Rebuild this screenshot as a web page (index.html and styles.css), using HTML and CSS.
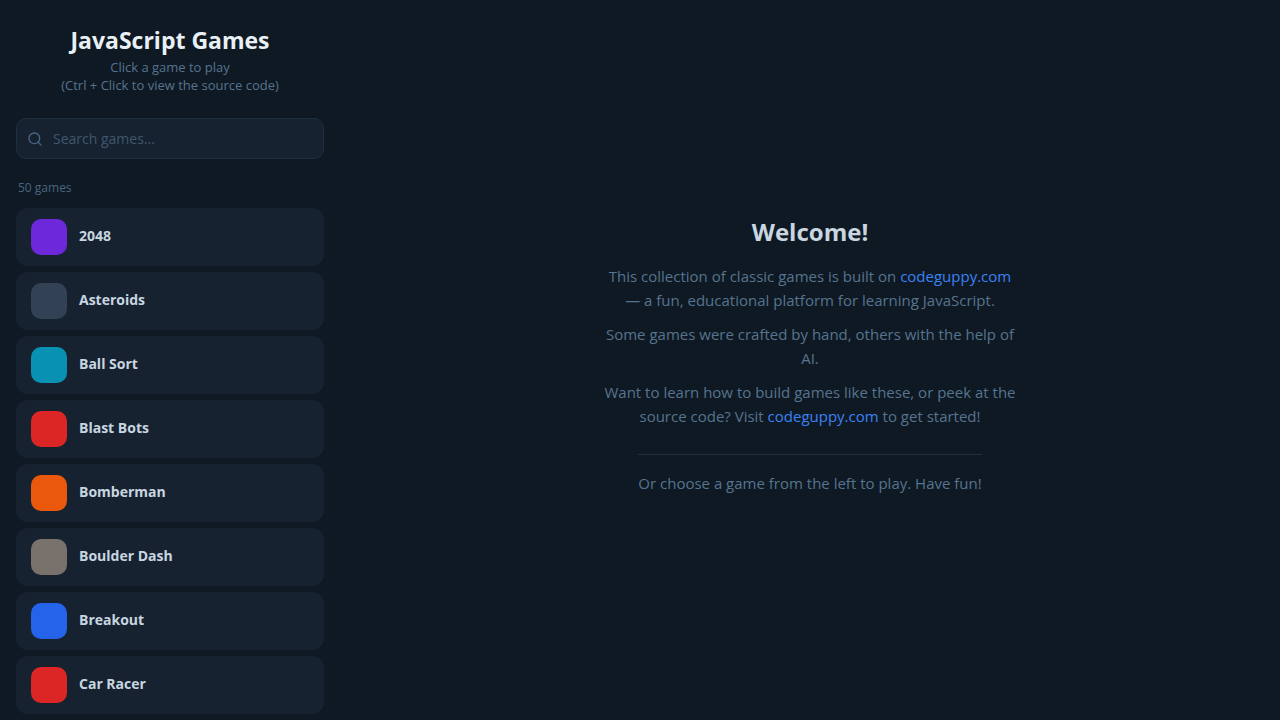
FILE: index.html
```html
<!DOCTYPE html>
<html lang="en">
<head>
    <meta charset="UTF-8">
    <meta name="viewport" content="width=device-width, initial-scale=1.0">
    <title>JavaScript Games</title>
    <link rel="stylesheet" href="styles.css">
</head>
<body>
    <aside class="sidebar">
        <header class="header">
            <h1>JavaScript Games</h1>
            <p>Click a game to play<br>(Ctrl + Click to view the source code)</p>
        </header>
        <label class="search">
            <svg class="search-icon" viewBox="0 0 24 24" aria-hidden="true">
                <circle cx="11" cy="11" r="8"/>
                <path d="M21 21l-4.35-4.35"/>
            </svg>
            <input type="search" placeholder="Search games..." aria-label="Search games">
        </label>
        <div class="count">50 games</div>
        <nav class="games">
            <a class="game" href="#2048"><span class="icon purple"></span><span class="name">2048</span></a>
            <a class="game" href="#asteroids"><span class="icon slate"></span><span class="name">Asteroids</span></a>
            <a class="game" href="#ball-sort"><span class="icon cyan"></span><span class="name">Ball Sort</span></a>
            <a class="game" href="#blast-bots"><span class="icon red"></span><span class="name">Blast Bots</span></a>
            <a class="game" href="#bomberman"><span class="icon orange"></span><span class="name">Bomberman</span></a>
            <a class="game" href="#boulder-dash"><span class="icon stone"></span><span class="name">Boulder Dash</span></a>
            <a class="game" href="#breakout"><span class="icon blue"></span><span class="name">Breakout</span></a>
            <a class="game" href="#car-racer"><span class="icon red"></span><span class="name">Car Racer</span></a>
        </nav>
    </aside>
    <main class="main">
        <div class="welcome">
            <h2>Welcome!</h2>
            <p>This collection of classic games is built on <a href="https://codeguppy.com">codeguppy.com</a> — a fun, educational platform for learning JavaScript.</p>
            <p>Some games were crafted by hand, others with the help of AI.</p>
            <p>Want to learn how to build games like these, or peek at the source code? Visit <a href="https://codeguppy.com">codeguppy.com</a> to get started!</p>
            <p class="hint">Or choose a game from the left to play. Have fun!</p>
        </div>
    </main>
</body>
</html>
```
FILE: styles.css
```css
*{
    margin: 0;
    padding: 0;
    box-sizing: border-box;
}
body{
    display: flex;
    height: 100vh;
    overflow: hidden;
    background: #0f1923;
    color: #c8d6e0;
    font-family: "Open Sans", "Noto Sans", sans-serif;
}
.sidebar{
    display: flex;
    flex-direction: column;
    flex: 0 0 340px;
    padding: 25px 16px 0;
    overflow: hidden;
}
.header{
    margin-bottom: 24px;
    text-align: center;
}
.header h1{
    margin-bottom: 3px;
    font-size: 23px;
    line-height: 30px;
    color: #e8f0f5;
}
.header p{
    font-size: 13px;
    line-height: 18px;
    color: #56748f;
}
.search{
    display: flex;
    align-items: center;
    gap: 10px;
    flex-shrink: 0;
    height: 41px;
    margin-bottom: 20px;
    padding: 0 10px;
    border: 1px solid #1e2f40;
    border-radius: 10px;
    background: #172231;
}
.search-icon{
    flex-shrink: 0;
    width: 16px;
    height: 16px;
    fill: none;
    stroke: #4a6580;
    stroke-width: 2;
    stroke-linecap: round;
    stroke-linejoin: round;
}
.search input{
    flex: 1;
    min-width: 0;
    border: 0;
    outline: 0;
    background: none;
    color: #c8d6e0;
    font-family: inherit;
    font-size: 14px;
}
.search input::placeholder{
    color: #3f566d;
}
.count{
    margin-bottom: 11px;
    padding-left: 2px;
    font-size: 12px;
    line-height: 18px;
    color: #4a6580;
}
.games{
    display: flex;
    flex-direction: column;
    gap: 6px;
}
.game{
    display: flex;
    align-items: center;
    gap: 12px;
    padding: 11px 15px;
    border-radius: 12px;
    background: #172231;
    color: #c8d6e0;
    font-size: 14px;
    font-weight: bold;
    text-decoration: none;
}
.name{
    padding-bottom: 3px;
}
.icon{
    width: 36px;
    height: 36px;
    border-radius: 10px;
}
.purple{
    background: #6d28d9;
}
.slate{
    background: #334155;
}
.cyan{
    background: #0891b2;
}
.red{
    background: #dc2626;
}
.orange{
    background: #ea580c;
}
.stone{
    background: #78716c;
}
.blue{
    background: #2563eb;
}
.main{
    display: flex;
    flex: 1;
    align-items: center;
    justify-content: center;
}
.welcome{
    display: flex;
    flex-direction: column;
    align-items: center;
    max-width: 420px;
    text-align: center;
}
.welcome h2{
    margin-bottom: 16px;
    font-size: 24px;
    line-height: 33px;
}
.welcome p{
    margin-bottom: 10px;
    font-size: 15px;
    line-height: 24px;
    color: #56748f;
}
.welcome a{
    color: #3b82f6;
    text-decoration: none;
}
.welcome .hint{
    margin-top: 16px;
    padding-top: 16px;
    border-top: 1px solid #1e2f40;
}
```
